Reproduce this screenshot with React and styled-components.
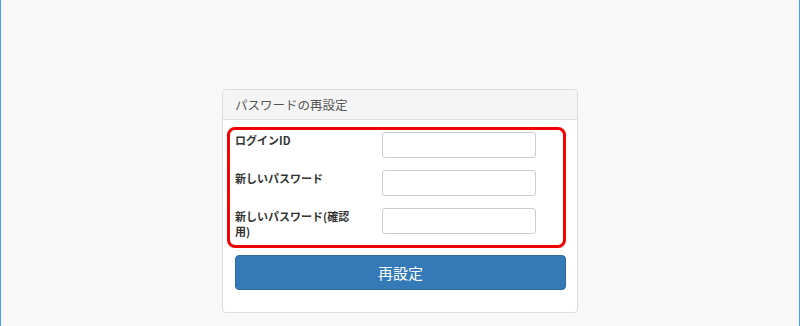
import React from "react";
import styled, { createGlobalStyle } from "styled-components";

const GlobalStyle = createGlobalStyle`
  html, body {
    margin: 0;
    padding: 0;
  }
  body {
    font-family: "Noto Sans CJK JP", "Noto Sans", sans-serif;
    color: #333;
  }
  * {
    box-sizing: border-box;
  }
`;

const Page = styled.div`
  height: 326px;
  display: flex;
  justify-content: center;
  align-items: flex-start;
  padding-top: 89px;
  background-color: #f8f8f8;
  border-left: 1px solid #4a9ee2;
  border-right: 1px solid #4a9ee2;
  overflow: hidden;
`;

const Panel = styled.div`
  width: 356px;
  background-color: #fff;
  border: 1px solid #ddd;
  border-radius: 4px;
`;

const PanelHeading = styled.div`
  height: 30px;
  display: flex;
  align-items: center;
  padding: 0 12px;
  background-color: #f5f5f5;
  border-bottom: 1px solid #ddd;
  border-radius: 3px 3px 0 0;
  font-size: 12.5px;
  color: #555;
`;

const PanelBody = styled.div`
  padding: 7px 11px 22px 4px;
`;

const FieldGroup = styled.div`
  border: 3px solid #f20000;
  border-radius: 8px;
  padding: 2px 27px 6px 5px;
  display: grid;
  grid-template-columns: 118px 154px;
  column-gap: 29px;
  row-gap: 12px;
`;

const Label = styled.label`
  font-size: 11px;
  font-weight: bold;
  line-height: 15px;
  padding-top: 1px;
  color: #333;
`;

const Input = styled.input`
  height: 26px;
  width: 100%;
  border: 1px solid #ccc;
  border-radius: 3px;
  background: #fff;
  padding: 0 6px;
`;

const SubmitButton = styled.button`
  display: block;
  margin: 7px 0 0 8px;
  width: 331px;
  height: 35px;
  background-color: #337ab7;
  border: 1px solid #2e6da4;
  border-radius: 4px;
  color: #fff;
  font-family: "Noto Sans CJK JP", "Noto Sans", sans-serif;
  font-size: 15px;
  cursor: pointer;
`;

const fields = [
  { id: "login", label: "ログインID", type: "text" },
  { id: "password", label: "新しいパスワード", type: "password" },
  { id: "confirm", label: "新しいパスワード(確認用)", type: "password" },
];

export default function App() {
  return (
    <>
      <GlobalStyle />
      <Page>
        <Panel>
          <PanelHeading>パスワードの再設定</PanelHeading>
          <PanelBody>
            <FieldGroup>
              {fields.map((f) => (
                <React.Fragment key={f.id}>
                  <Label htmlFor={f.id}>{f.label}</Label>
                  <Input id={f.id} type={f.type} />
                </React.Fragment>
              ))}
            </FieldGroup>
            <SubmitButton type="button">再設定</SubmitButton>
          </PanelBody>
        </Panel>
      </Page>
    </>
  );
}
